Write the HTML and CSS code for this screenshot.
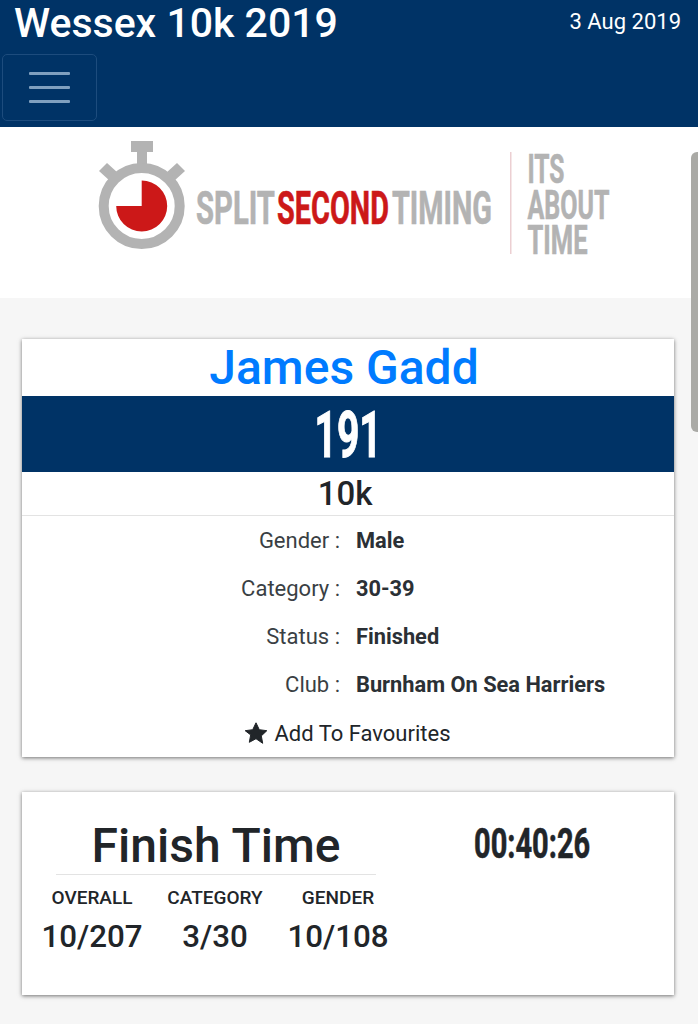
FILE: index.html
```html
<!DOCTYPE html>
<html lang="en">
<head>
    <meta charset="UTF-8">
    <meta name="viewport" content="width=device-width, initial-scale=1.0">
    <title>Wessex 10k 2019</title>
    <link rel="stylesheet" href="styles.css">
</head>

<body>
    <header class="topbar">
        <div class="topbar-row">
            <h1 class="event-name">Wessex 10k 2019</h1>
            <span class="event-date">3 Aug 2019</span>
        </div>
        <button class="menu-toggle" aria-label="Menu">
            <span></span><span></span><span></span>
        </button>
    </header>

    <!-- Sponsor logo -->
    <div class="logo-band">
        <svg class="logo" width="520" height="120" viewBox="0 0 520 120">
            <rect x="33" y="0" width="22" height="11" fill="#b3b3b3"/>
            <rect x="39" y="11" width="10" height="14" fill="#b3b3b3"/>
            <path d="M1 30l8-8 11 10-8 8zM87 30l-8-8-11 10 8 8z" fill="#b3b3b3"/>
            <circle cx="43.700" cy="65" r="38" fill="none" stroke="#b3b3b3" stroke-width="10"/>
            <path d="M43.700 65V39.500A25.500 25.500 0 1 1 18.200 65z" fill="#cc1818"/>
            <text class="logo-word" x="98" y="83" font-size="46" fill="#b3b3b3" stroke="#b3b3b3" textLength="79" lengthAdjust="spacingAndGlyphs">SPLIT</text>
            <text class="logo-word" x="179" y="83" font-size="46" fill="#cc1818" stroke="#cc1818" textLength="112" lengthAdjust="spacingAndGlyphs">SECOND</text>
            <text class="logo-word" x="294" y="83" font-size="46" fill="#b3b3b3" stroke="#b3b3b3" textLength="100" lengthAdjust="spacingAndGlyphs">TIMING</text>
            <rect x="412" y="11" width="1.500" height="102" fill="#eccfd2"/>
            <text class="logo-word" x="429.500" y="42" font-size="41" fill="#b3b3b3" stroke="#b3b3b3" textLength="37" lengthAdjust="spacingAndGlyphs">ITS</text>
            <text class="logo-word" x="429.500" y="78" font-size="41" fill="#b3b3b3" stroke="#b3b3b3" textLength="82" lengthAdjust="spacingAndGlyphs">ABOUT</text>
            <text class="logo-word" x="429.500" y="113" font-size="41" fill="#b3b3b3" stroke="#b3b3b3" textLength="60" lengthAdjust="spacingAndGlyphs">TIME</text>
        </svg>
    </div>

    <div class="scroll-thumb"></div>

    <main class="content">
        <section class="card runner-card">
            <h2 class="runner-name">James Gadd</h2>
            <div class="bib-bar"><span class="bib-number">191</span></div>
            <div class="race-name">10k</div>
            <dl class="details">
                <div class="detail-row"><dt>Gender :</dt><dd>Male</dd></div>
                <div class="detail-row"><dt>Category :</dt><dd>30-39</dd></div>
                <div class="detail-row"><dt>Status :</dt><dd>Finished</dd></div>
                <div class="detail-row"><dt>Club :</dt><dd>Burnham On Sea Harriers</dd></div>
            </dl>
            <div class="favourite">
                <svg width="24" height="22" viewBox="0 0 24 22"><path d="M12 .8l3.300 6.900 7.500 1-5.500 5.200 1.400 7.400L12 16.700l-6.700 3.600 1.400-7.400L1.200 8.700l7.500-1z" fill="#212529" stroke="#212529" stroke-width="1" stroke-linejoin="round"/></svg>
                Add To Favourites
            </div>
        </section>

        <section class="card result-card">
            <div class="result-left">
                <h2 class="result-title">Finish Time</h2>
                <div class="positions">
                    <div class="position"><span class="position-label">OVERALL</span><span class="position-value">10/207</span></div>
                    <div class="position"><span class="position-label">CATEGORY</span><span class="position-value">3/30</span></div>
                    <div class="position"><span class="position-label">GENDER</span><span class="position-value">10/108</span></div>
                </div>
            </div>
            <div class="result-time"><span class="time-value">00:40:26</span></div>
        </section>
    </main>
</body>
</html>
```

FILE: styles.css
```css
/* General styles */
html, body {
    margin: 0;
    padding: 0;
    height: 1024px;
    overflow: hidden;
}

body {
    font-family: Roboto, Arial, sans-serif;
    background-color: #f6f6f6;
    color: #212529;
    position: relative;
}

/* Top bar */
.topbar {
    background-color: #003366;
    height: 127px;
    box-sizing: border-box;
    color: white;
}

.topbar-row {
    display: flex;
    justify-content: space-between;
    height: 54px;
    padding: 0 17px 0 14px;
}

.event-name {
    margin: 1px 0 0;
    font-size: 41px;
    font-weight: 500;
    line-height: 44px;
}

.event-date {
    font-size: 22px;
    line-height: 24px;
    margin-top: 10px;
}

.menu-toggle {
    display: flex;
    flex-direction: column;
    justify-content: center;
    align-items: center;
    gap: 11px;
    width: 95px;
    height: 67px;
    margin-left: 2px;
    padding: 0;
    background: none;
    border: 1px solid #1d4c7d;
    border-radius: 5px;
}

.menu-toggle span {
    display: block;
    width: 41px;
    height: 3px;
    border-radius: 1px;
    background-color: #80a0bf;
}

/* Logo */
.logo-band {
    background-color: white;
    height: 171px;
    padding-top: 14px;
    box-sizing: border-box;
    padding-left: 98px;
}

.logo {
    display: block;
}

.logo-word {
    font-family: Roboto, Arial, sans-serif;
    font-weight: 700;
    stroke-width: 0.6px;
}

.scroll-thumb {
    position: absolute;
    top: 152px;
    right: 0;
    width: 7px;
    height: 280px;
    background-color: #aaaaa6;
    border-radius: 6px 0 0 6px;
}

/* Cards */
.content {
    padding: 41px 24px 0 22px;
    display: flex;
    flex-direction: column;
    gap: 35px;
}

.card {
    background-color: white;
    box-shadow: 0 1px 4px rgba(0, 0, 0, 0.55);
}

.runner-card {
    height: 418px;
    text-align: center;
}

.runner-name {
    margin: 0;
    height: 57px;
    padding-right: 8px;
    font-size: 48px;
    font-weight: 500;
    line-height: 57px;
    color: #007bff;
}

.bib-bar {
    background-color: #003366;
    height: 76px;
    line-height: 80px;
    color: white;
}

.bib-number {
    display: inline-block;
    font-size: 64px;
    font-weight: 700;
    -webkit-text-stroke: 1px white;
    transform: scaleX(0.61);
}

.race-name {
    height: 43px;
    padding-right: 6px;
    line-height: 43px;
    font-size: 33px;
    font-weight: 500;
    border-bottom: 1px solid #e3e3e3;
}

/* Detail rows */
.details {
    margin: 0;
    padding-top: 1px;
}

.detail-row {
    display: grid;
    grid-template-columns: 318px 1fr;
    column-gap: 16px;
    height: 48px;
    line-height: 47px;
    font-size: 22px;
    text-align: left;
}

.detail-row dt {
    text-align: right;
    color: #3a3f44;
}

.detail-row dd {
    margin: 0;
    font-size: 21.800px;
    font-weight: 700;
    color: #2b3035;
}

.favourite {
    display: flex;
    justify-content: center;
    align-items: center;
    gap: 6px;
    height: 48px;
    font-size: 22px;
    padding-right: 1px;
}

/* Result card */
.result-card {
    height: 203px;
    display: flex;
}

.result-left {
    width: 320px;
    margin-left: 34px;
    text-align: center;
}

.result-title {
    margin: 0;
    height: 82px;
    line-height: 108px;
    border-bottom: 1px solid #e3e3e3;
    font-size: 48px;
    font-weight: 500;
}

.positions {
    display: grid;
    grid-template-columns: 124px 122px 124px;
    margin-left: -26px;
    width: 370px;
}

.position {
    display: flex;
    flex-direction: column;
    align-items: center;
}

.position-label {
    font-size: 19px;
    font-weight: 500;
    line-height: 22px;
    margin-top: 12px;
}

.position-value {
    font-size: 31.300px;
    font-weight: 500;
    line-height: 36px;
    margin-top: 10px;
}

.result-time {
    flex: 1;
    text-align: center;
    padding-left: 15px;
}

.time-value {
    display: inline-block;
    font-size: 42px;
    font-weight: 700;
    line-height: 46px;
    margin-top: 29px;
    -webkit-text-stroke: 0.6px #212529;
    transform: scaleX(0.69);
}
```
